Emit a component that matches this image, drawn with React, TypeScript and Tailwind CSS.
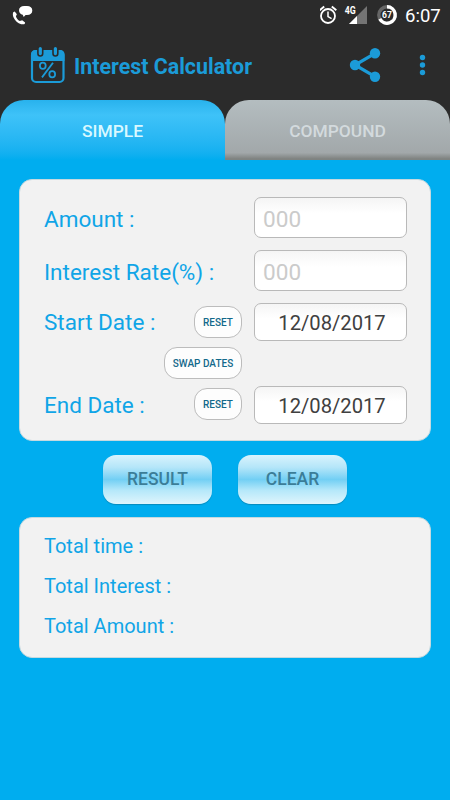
import type { ReactNode } from "react";

function StatusBar() {
  return (
    <div className="flex h-8 shrink-0 text-white">
      <svg className="h-8 w-[320px] shrink-0" viewBox="0 0 320 32" fill="#fff">
        <path d="M13.2 12.2 C12.6 14 12.8 15.8 13.6 17.6 C15 20.8 17.8 23.3 21.2 24.2 C22.7 24.5 23.9 24.4 24.7 23.9 L25.1 22.4 L22.2 20.2 L19.8 21 C17.8 20 16.5 18.2 15.9 16.2 L16.9 14.2 L14.7 11.5 Z" />
        <path d="M24.2 6 C21 6 19 7.7 19 10.3 C19 12.7 20.6 14.4 22.7 14.8 L23.7 17 L25.6 15 H27 C30.4 15 32.3 13.2 32.3 10.4 C32.3 7.7 30.3 6 27 6 Z" />
      </svg>
      <svg className="h-8 w-[84px] shrink-0" viewBox="320 0 84 32">
        <g fill="none" stroke="#fff" strokeWidth="1.8">
          <circle cx="328" cy="16" r="7" />
          <path d="M328 11.6 V16.6 L331.6 18.6" strokeWidth="1.5" />
          <path d="M319.7 10.3 L324.2 6.5 M331.8 6.5 L336.3 10.3" strokeWidth="1.9" />
        </g>
        <text x="344.8" y="13.8" fill="#fff" fontFamily="Roboto, sans-serif" fontSize="10.5" fontWeight="700" textLength="11" lengthAdjust="spacingAndGlyphs">4G</text>
        <path d="M349 24 L367 6 V24 Z" fill="#747474" />
        <path d="M349 24 L357 16 V24 Z" fill="#fff" />
        <circle cx="387" cy="15" r="8.2" fill="none" stroke="#666" strokeWidth="3.4" />
        <path d="M387 6.8 A8.2 8.2 0 1 1 379.8 18.9" fill="none" stroke="#fff" strokeWidth="3.4" />
        <text x="382.1" y="18.4" fill="#fff" fontFamily="Roboto, sans-serif" fontSize="9.5" fontWeight="700" textLength="9.8" lengthAdjust="spacingAndGlyphs">67</text>
      </svg>
      <span className="ml-[1px] mt-[2px] text-[18.5px] leading-7 whitespace-nowrap">6:07</span>
    </div>
  );
}

function AppBar() {
  return (
    <div className="flex h-[68px] shrink-0 items-start text-[#1b9bd8]">
      <svg className="ml-[30px] mt-[14px] h-[38px] w-[36px] shrink-0" viewBox="30 46 36 38">
        <rect x="32" y="51" width="31.5" height="31" rx="4" fill="none" stroke="currentColor" strokeWidth="2.2" />
        <path d="M31 61 V54.5 Q31 50 35.5 50 H60 Q64.5 50 64.5 54.5 V61 Z" fill="currentColor" />
        <g fill="currentColor" stroke="#2b2b2b" strokeWidth="1.6">
          <rect x="37.9" y="46.2" width="4.8" height="9.8" rx="2.4" />
          <rect x="53" y="46.2" width="4.8" height="9.8" rx="2.4" />
        </g>
        <g fill="none" stroke="currentColor" strokeWidth="1.8">
          <ellipse cx="42.8" cy="65.8" rx="2.9" ry="3.1" />
          <ellipse cx="52.2" cy="74.2" rx="2.9" ry="3.1" />
          <path d="M53 62.8 L42 77.4" />
        </g>
      </svg>
      <h1 className="ml-2 mt-[19px] w-[266px] text-[21.4px] font-bold leading-8 whitespace-nowrap">Interest Calculator</h1>
      <svg className="mt-[14px] h-[38px] w-[90px] shrink-0" viewBox="340 46 90 38" fill="currentColor">
        <path d="M375 53.3 L355 65 L375 76.7" fill="none" stroke="currentColor" strokeWidth="3.2" />
        <circle cx="375" cy="53.3" r="5.2" />
        <circle cx="355" cy="65" r="5.2" />
        <circle cx="375" cy="76.7" r="5.2" />
        <circle cx="422.5" cy="57.5" r="2.7" />
        <circle cx="422.5" cy="65" r="2.7" />
        <circle cx="422.5" cy="72.5" r="2.7" />
      </svg>
    </div>
  );
}

function Tabs() {
  return (
    <div className="flex h-[60px] shrink-0 bg-linear-to-b from-[#2b2b2b] from-50% to-[#00adef] to-50% text-[17.4px] font-medium">
      <button className="h-[60px] w-[225px] rounded-t-[24px] bg-linear-to-b from-[#28b2ed] via-[#3ec2f8] via-25% to-[#00adef] pt-[2px] text-[#d9f8ff]">SIMPLE</button>
      <button className="h-[60px] w-[225px] rounded-t-[24px] bg-[linear-gradient(to_bottom,#b4bdc0_0%,#a2a8aa_88%,#7f8381_98%)] pt-[2px] text-[#d3dadd]">COMPOUND</button>
    </div>
  );
}

const fieldStyle =
  "ml-auto w-[153px] shrink-0 rounded-[7px] border border-[#b9b9b9] bg-linear-to-b from-[#f5f5f5] to-white to-40% outline-none";

function Row({ label, className, children }: { label?: string; className: string; children: ReactNode }) {
  return (
    <div className={`flex items-center ${className}`}>
      {label && <span className="text-[22.5px] leading-7 whitespace-nowrap">{label}</span>}
      {children}
    </div>
  );
}

function Pill({ children, className }: { children: string; className: string }) {
  return (
    <button className={`ml-auto h-8 shrink-0 rounded-[13px] border border-[#bcbcbc] bg-[#fdfdfd] text-[10px] font-medium text-[#13698b] ${className}`}>
      {children}
    </button>
  );
}

function AmountField() {
  return <input className={`${fieldStyle} h-[41px] px-2 pt-[3px] text-[22.6px] text-[#474747] placeholder:text-[#cbcbcb]`} placeholder="000" />;
}

function DateField() {
  return <input className={`${fieldStyle} !ml-3 h-[38px] pt-[1px] pl-[3px] text-center text-[20.2px] text-[#404040]`} defaultValue="12/08/2017" />;
}

function ActionButton({ children }: { children: string }) {
  return (
    <button className="h-[49px] w-[109px] rounded-[13px] bg-[linear-gradient(to_bottom,#d9f3fd_0%,#b5e6f9_25%,#72cff4_50%,#b5e8fa_72%,#e0f5fc_100%)] text-[17.5px] font-medium text-[#3b7d98] shadow-[0_1px_1px_#078bbd]">
      {children}
    </button>
  );
}

export default function App() {
  return (
    <div className="flex h-[800px] w-[450px] flex-col overflow-hidden bg-[#00adef] font-[Roboto,sans-serif]">
      <header className="h-[100px] shrink-0 bg-[#2b2b2b]">
        <StatusBar />
        <AppBar />
      </header>
      <Tabs />
      <main className="px-[19px] pt-[19px] text-[#10a5e7]">
        <section className="h-[262px] rounded-[13px] border border-[#c6d9df] bg-[#f2f2f2] pt-[17px] pr-[23px] pl-6">
          <Row label="Amount :" className="mb-3 h-[41px] [&>span]:pt-[2px]"><AmountField /></Row>
          <Row label="Interest Rate(%) :" className="mb-3 h-[41px] [&>span]:pt-[2px]"><AmountField /></Row>
          <Row label="Start Date :" className="mb-1.5 h-[38px]"><Pill className="w-12">RESET</Pill><DateField /></Row>
          <Row className="mb-[7px] h-8 pr-[165px]"><Pill className="w-[78px]">SWAP DATES</Pill></Row>
          <Row label="End Date :" className="h-[38px] [&>span]:pb-[1px] [&>button]:mb-[2px]"><Pill className="w-12">RESET</Pill><DateField /></Row>
        </section>
        <div className="mt-3.5 flex gap-[26px] pl-[84px]">
          <ActionButton>RESULT</ActionButton>
          <ActionButton>CLEAR</ActionButton>
        </div>
        <section className="mt-[13px] flex h-[141px] flex-col gap-2 rounded-[13px] border border-[#c6d9df] bg-[#f2f2f2] pt-3 pl-6 text-[20px] leading-8">
          <p>Total time :</p>
          <p>Total Interest :</p>
          <p>Total Amount :</p>
        </section>
      </main>
    </div>
  );
}
